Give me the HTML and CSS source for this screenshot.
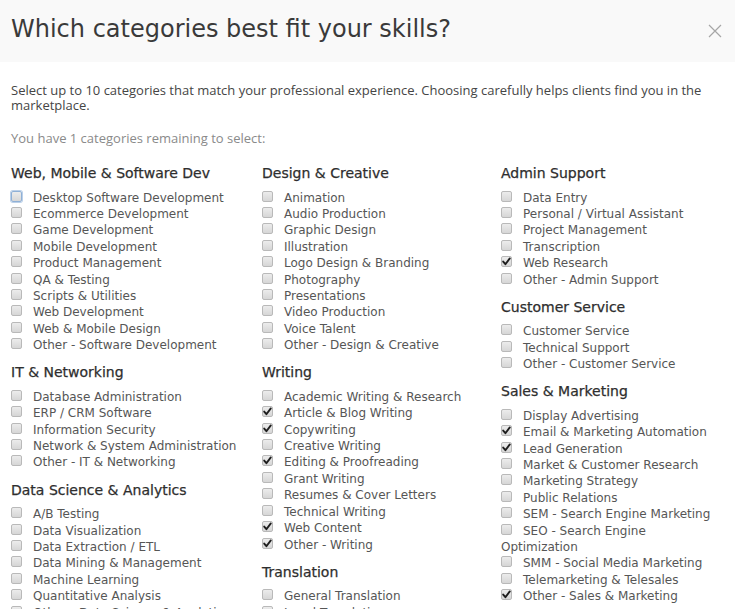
FILE: index.html
```html
<!DOCTYPE html>
<html>
<head>
<meta charset="utf-8">
<link rel="stylesheet" href="styles.css">
</head>
<body>
<div class="header">
  <h1 class="title">Which categories best fit your skills?</h1>
  <svg class="close" width="14" height="14" viewBox="0 0 14 14"><path d="M1 1 L13 13 M13 1 L1 13" stroke="#a6a6a6" stroke-width="1.2" fill="none"/></svg>
</div>
<div class="intro">
  <p class="lead">Select up to 10 categories that match your professional experience. Choosing carefully helps clients find you in the marketplace.</p>
  <p class="remaining">You have 1 categories remaining to select:</p>
</div>
<div class="grid">
  <div class="col">
    <div class="section">
      <h2 class="heading">Web, Mobile &amp; Software Dev</h2>
      <div class="item"><span class="cb focus"></span>Desktop Software Development</div>
      <div class="item"><span class="cb"></span>Ecommerce Development</div>
      <div class="item"><span class="cb"></span>Game Development</div>
      <div class="item"><span class="cb"></span>Mobile Development</div>
      <div class="item"><span class="cb"></span>Product Management</div>
      <div class="item"><span class="cb"></span>QA &amp; Testing</div>
      <div class="item"><span class="cb"></span>Scripts &amp; Utilities</div>
      <div class="item"><span class="cb"></span>Web Development</div>
      <div class="item"><span class="cb"></span>Web &amp; Mobile Design</div>
      <div class="item"><span class="cb"></span>Other - Software Development</div>
    </div>
    <div class="section">
      <h2 class="heading">IT &amp; Networking</h2>
      <div class="item"><span class="cb"></span>Database Administration</div>
      <div class="item"><span class="cb"></span>ERP / CRM Software</div>
      <div class="item"><span class="cb"></span>Information Security</div>
      <div class="item"><span class="cb"></span>Network &amp; System Administration</div>
      <div class="item"><span class="cb"></span>Other - IT &amp; Networking</div>
    </div>
    <div class="section">
      <h2 class="heading">Data Science &amp; Analytics</h2>
      <div class="item"><span class="cb"></span>A/B Testing</div>
      <div class="item"><span class="cb"></span>Data Visualization</div>
      <div class="item"><span class="cb"></span>Data Extraction / ETL</div>
      <div class="item"><span class="cb"></span>Data Mining &amp; Management</div>
      <div class="item"><span class="cb"></span>Machine Learning</div>
      <div class="item"><span class="cb"></span>Quantitative Analysis</div>
      <div class="item"><span class="cb"></span>Other - Data Science &amp; Analytics</div>
    </div>
  </div>
  <div class="col">
    <div class="section">
      <h2 class="heading">Design &amp; Creative</h2>
      <div class="item"><span class="cb"></span>Animation</div>
      <div class="item"><span class="cb"></span>Audio Production</div>
      <div class="item"><span class="cb"></span>Graphic Design</div>
      <div class="item"><span class="cb"></span>Illustration</div>
      <div class="item"><span class="cb"></span>Logo Design &amp; Branding</div>
      <div class="item"><span class="cb"></span>Photography</div>
      <div class="item"><span class="cb"></span>Presentations</div>
      <div class="item"><span class="cb"></span>Video Production</div>
      <div class="item"><span class="cb"></span>Voice Talent</div>
      <div class="item"><span class="cb"></span>Other - Design &amp; Creative</div>
    </div>
    <div class="section">
      <h2 class="heading">Writing</h2>
      <div class="item"><span class="cb"></span>Academic Writing &amp; Research</div>
      <div class="item"><span class="cb checked"><svg viewBox="0 0 11 11"><path d="M2.2 5.6 L4.4 8.2 L8.8 2.4" /></svg></span>Article &amp; Blog Writing</div>
      <div class="item"><span class="cb checked"><svg viewBox="0 0 11 11"><path d="M2.2 5.6 L4.4 8.2 L8.8 2.4" /></svg></span>Copywriting</div>
      <div class="item"><span class="cb"></span>Creative Writing</div>
      <div class="item"><span class="cb checked"><svg viewBox="0 0 11 11"><path d="M2.2 5.6 L4.4 8.2 L8.8 2.4" /></svg></span>Editing &amp; Proofreading</div>
      <div class="item"><span class="cb"></span>Grant Writing</div>
      <div class="item"><span class="cb"></span>Resumes &amp; Cover Letters</div>
      <div class="item"><span class="cb"></span>Technical Writing</div>
      <div class="item"><span class="cb checked"><svg viewBox="0 0 11 11"><path d="M2.2 5.6 L4.4 8.2 L8.8 2.4" /></svg></span>Web Content</div>
      <div class="item"><span class="cb checked"><svg viewBox="0 0 11 11"><path d="M2.2 5.6 L4.4 8.2 L8.8 2.4" /></svg></span>Other - Writing</div>
    </div>
    <div class="section">
      <h2 class="heading">Translation</h2>
      <div class="item"><span class="cb"></span>General Translation</div>
      <div class="item"><span class="cb"></span>Legal Translation</div>
      <div class="item"><span class="cb"></span>Medical Translation</div>
      <div class="item"><span class="cb"></span>Technical Translation</div>
    </div>
  </div>
  <div class="col">
    <div class="section">
      <h2 class="heading">Admin Support</h2>
      <div class="item"><span class="cb"></span>Data Entry</div>
      <div class="item"><span class="cb"></span>Personal / Virtual Assistant</div>
      <div class="item"><span class="cb"></span>Project Management</div>
      <div class="item"><span class="cb"></span>Transcription</div>
      <div class="item"><span class="cb checked"><svg viewBox="0 0 11 11"><path d="M2.2 5.6 L4.4 8.2 L8.8 2.4" /></svg></span>Web Research</div>
      <div class="item"><span class="cb"></span>Other - Admin Support</div>
    </div>
    <div class="section">
      <h2 class="heading">Customer Service</h2>
      <div class="item"><span class="cb"></span>Customer Service</div>
      <div class="item"><span class="cb"></span>Technical Support</div>
      <div class="item"><span class="cb"></span>Other - Customer Service</div>
    </div>
    <div class="section">
      <h2 class="heading">Sales &amp; Marketing</h2>
      <div class="item"><span class="cb"></span>Display Advertising</div>
      <div class="item"><span class="cb checked"><svg viewBox="0 0 11 11"><path d="M2.2 5.6 L4.4 8.2 L8.8 2.4" /></svg></span>Email &amp; Marketing Automation</div>
      <div class="item"><span class="cb checked"><svg viewBox="0 0 11 11"><path d="M2.2 5.6 L4.4 8.2 L8.8 2.4" /></svg></span>Lead Generation</div>
      <div class="item"><span class="cb"></span>Market &amp; Customer Research</div>
      <div class="item"><span class="cb"></span>Marketing Strategy</div>
      <div class="item"><span class="cb"></span>Public Relations</div>
      <div class="item"><span class="cb"></span>SEM - Search Engine Marketing</div>
      <div class="item"><span class="cb"></span>SEO - Search Engine Optimization</div>
      <div class="item"><span class="cb"></span>SMM - Social Media Marketing</div>
      <div class="item"><span class="cb"></span>Telemarketing &amp; Telesales</div>
      <div class="item"><span class="cb checked"><svg viewBox="0 0 11 11"><path d="M2.2 5.6 L4.4 8.2 L8.8 2.4" /></svg></span>Other - Sales &amp; Marketing</div>
    </div>
  </div>
</div>
</body>
</html>
```
FILE: styles.css
```css
html, body {
  margin: 0;
  padding: 0;
  overflow: hidden;
  background: #ffffff;
}
body {
  font-family: "DejaVu Sans", sans-serif;
  color: #555;
}
.header {
  height: 62px;
  box-sizing: border-box;
  background: #f9f9f9;
  padding: 15px 13px 0 11px;
  display: flex;
  justify-content: space-between;
  align-items: flex-start;
}
.title {
  margin: 0;
  font-size: 24px;
  line-height: 28px;
  font-weight: normal;
  color: #3a3a3a;
}
.close {
  margin-top: 9px;
}
.intro {
  padding: 20.5px 11px 0;
  font-family: "Open Sans", "Liberation Sans", sans-serif;
  font-size: 13px;
  line-height: 15px;
}
.lead {
  margin: 0;
  color: #454545;
}
.remaining {
  margin: 18.5px 0 0;
  color: #8a8a8a;
}
.grid {
  display: grid;
  grid-template-columns: 251px 239px 1fr;
  padding: 17px 11px 0;
}
.section {
  margin-bottom: 8.8px;
}
.heading {
  margin: 0 0 6.5px;
  font-size: 14px;
  line-height: 20px;
  font-weight: normal;
  color: #2e2e2e;
  -webkit-text-stroke: 0.25px #2e2e2e;
}
.item {
  font-size: 12px;
  line-height: 16.4px;
  color: #565656;
}
.cb {
  display: inline-block;
  position: relative;
  width: 11px;
  height: 11px;
  box-sizing: border-box;
  margin-right: 11px;
  border: 1px solid #b9b9b9;
  border-radius: 2px;
  background: linear-gradient(#ececec, #d6d6d6);
  vertical-align: baseline;
}
.cb.focus {
  border-color: #8fb0d6;
  box-shadow: 0 0 0 1px #bcd0e8;
}
.cb svg {
  position: absolute;
  left: -1px;
  top: -1px;
  width: 11px;
  height: 11px;
}
.cb svg path {
  fill: none;
  stroke: #1e1e1e;
  stroke-width: 1.9;
  stroke-linecap: round;
  stroke-linejoin: round;
}
```
